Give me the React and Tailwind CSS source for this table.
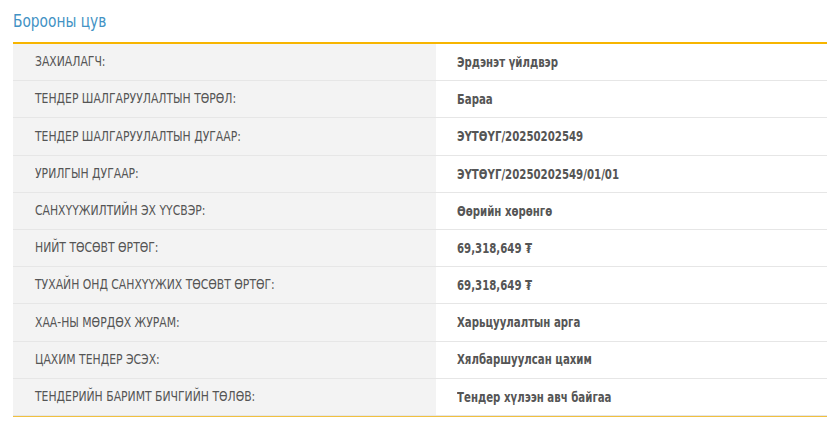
const rows = [
  ["ЗАХИАЛАГЧ:", "Эрдэнэт үйлдвэр"],
  ["ТЕНДЕР ШАЛГАРУУЛАЛТЫН ТӨРӨЛ:", "Бараа"],
  ["ТЕНДЕР ШАЛГАРУУЛАЛТЫН ДУГААР:", "ЭҮТӨҮГ/20250202549"],
  ["УРИЛГЫН ДУГААР:", "ЭҮТӨҮГ/20250202549/01/01"],
  ["САНХҮҮЖИЛТИЙН ЭХ ҮҮСВЭР:", "Өөрийн хөрөнгө"],
  ["НИЙТ ТӨСӨВТ ӨРТӨГ:", "69,318,649 ₮"],
  ["ТУХАЙН ОНД САНХҮҮЖИХ ТӨСӨВТ ӨРТӨГ:", "69,318,649 ₮"],
  ["ХАА-НЫ МӨРДӨХ ЖУРАМ:", "Харьцуулалтын арга"],
  ["ЦАХИМ ТЕНДЕР ЭСЭХ:", "Хялбаршуулсан цахим"],
  ["ТЕНДЕРИЙН БАРИМТ БИЧГИЙН ТӨЛӨВ:", "Тендер хүлээн авч байгаа"],
];

export default function App() {
  return (
    <div className="w-[827px] h-[430px] bg-white pl-[13px] font-['DejaVu_Sans_Condensed','DejaVu_Sans',sans-serif] text-[#555]">
      <div className="h-[42px] flex items-center text-[18px] text-[#4292c4] pb-[1px]">
        <span className="inline-block scale-x-[0.85] origin-left">Борооны цув</span>
      </div>
      <div className="border-t-2 border-[#f7b500]">
        {rows.map(([label, value], i) => (
          <div key={i} className="flex h-[37.2px] border-b border-[#e6e6e6]">
            <div className="w-[423px] bg-[#f3f3f3] pl-[22px] flex items-center text-[14.5px]">
              <span className="inline-block whitespace-nowrap scale-x-[0.83] origin-left">{label}</span>
            </div>
            <div className="flex-1 pl-[21px] flex items-center text-[13.5px] font-bold">
              <span className="inline-block whitespace-nowrap scale-x-[0.84] origin-left">{value}</span>
            </div>
          </div>
        ))}
        <div className="h-[1.5px] bg-[#f0c040]" />
      </div>
    </div>
  );
}
